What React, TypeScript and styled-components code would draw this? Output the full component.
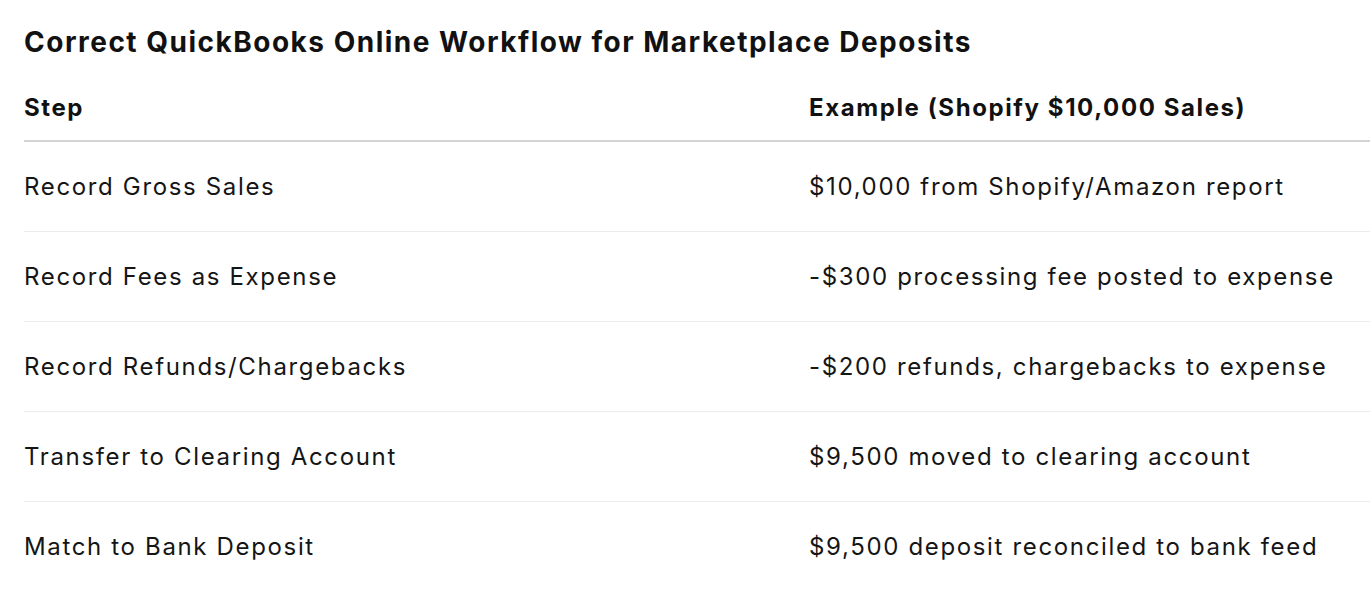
import React from "react";
import styled, {createGlobalStyle} from "styled-components";

const GlobalStyle = createGlobalStyle`
  html, body {
    margin: 0;
    padding: 0;
    background: #ffffff;
    overflow: hidden;
  }
  body {
    font-family: Inter, "Noto Sans", "Liberation Sans", sans-serif;
    color: #111111;
  }
`;

const rows = [
    {step: "Record Gross Sales", example: "$10,000 from Shopify/Amazon report"},
    {step: "Record Fees as Expense", example: "-$300 processing fee posted to expense"},
    {step: "Record Refunds/Chargebacks", example: "-$200 refunds, chargebacks to expense"},
    {step: "Transfer to Clearing Account", example: "$9,500 moved to clearing account"},
    {step: "Match to Bank Deposit", example: "$9,500 deposit reconciled to bank feed"},
];

const App = () => {
    return (
        <Page>
            <GlobalStyle/>
            <Title>Correct QuickBooks Online Workflow for Marketplace Deposits</Title>
            <Table>
                <HeadRow>
                    <HeadCell>Step</HeadCell>
                    <HeadCell>Example (Shopify $10,000 Sales)</HeadCell>
                </HeadRow>
                {rows.map((r, i) => (
                    <Row key={r.step} last={i === rows.length - 1}>
                        <Cell>{r.step}</Cell>
                        <Cell>{r.example}</Cell>
                    </Row>
                ))}
            </Table>
        </Page>
    )
};

const Page = styled.div`
  padding: 24px 0 0 24px;
  width: 1400px;
`;

const Title = styled.h2`
  margin: 0;
  font-size: 28px;
  line-height: 36px;
  font-weight: 700;
  letter-spacing: 1.5px;
  white-space: nowrap;
  color: #111111;
`;

const Table = styled.div`
  display: flex;
  flex-direction: column;
  margin-top: 16px;
`;

const HeadRow = styled.div`
  display: grid;
  grid-template-columns: 785px 1fr;
  height: 64px;
  align-items: center;
  border-bottom: 2px solid #d4d4d4;
`;

const Row = styled.div<{ last?: boolean }>`
  display: grid;
  grid-template-columns: 785px 1fr;
  height: 89px;
  align-items: center;
  border-bottom: 1px solid ${p => p.last ? "transparent" : "#ececec"};
`;

const HeadCell = styled.div`
  font-size: 24px;
  line-height: 32px;
  font-weight: 700;
  letter-spacing: 1.6px;
  white-space: nowrap;
  color: #111111;
`;

const Cell = styled.div`
  font-size: 24px;
  line-height: 32px;
  font-weight: 400;
  letter-spacing: 1.65px;
  white-space: nowrap;
  color: #151515;
`;

export default App;
